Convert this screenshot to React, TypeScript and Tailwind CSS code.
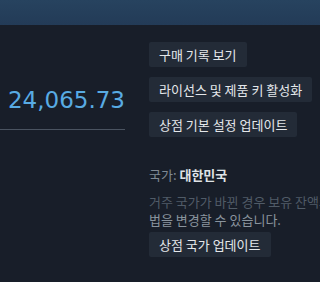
import React from 'react'

const btn =
    'flex h-[25px] items-center self-start whitespace-nowrap rounded-[2px] bg-[#232b37] px-[10px] text-[13px] text-[#e4e7ea]'

export default function App() {
    return (
        <div
            className="h-screen w-full overflow-hidden bg-[#181e29]"
            style={{ fontFamily: '"Noto Sans CJK KR", "Noto Sans", sans-serif' }}
        >
            {/* header strip */}
            <div className="h-[25px] bg-gradient-to-b from-[#27435f] to-[#233b57]" />

            <div className="flex gap-[24px]">
                {/* balance */}
                <div className="w-[125px] shrink-0 pt-[57px]">
                    <div className="border-b border-[#4a5360] pb-[11px] text-right text-[23px] leading-[36px] text-[#58abe3] [font-family:'DejaVu_Sans',sans-serif]">
                        24,065.73
                    </div>
                </div>

                {/* actions */}
                <div className="flex w-[300px] shrink-0 flex-col pt-[17px]">
                    <div className="flex flex-col gap-[10px]">
                        <button className={btn}>구매 기록 보기</button>
                        <button className={btn}>라이선스 및 제품 키 활성화</button>
                        <button className={btn}>상점 기본 설정 업데이트</button>
                    </div>

                    <div className="mt-[29px] text-[13px] leading-[18px] text-[#7f8994]">
                        국가: <span className="font-bold text-[#dfe3e6]">대한민국</span>
                    </div>

                    <div className="mt-[9px] whitespace-nowrap text-[13px] leading-[18px]">
                        <div className="text-[#505b67]">거주 국가가 바뀐 경우 보유 잔액과 결제 방</div>
                        <div className="text-[#8a949e]">법을 변경할 수 있습니다.</div>
                    </div>

                    <button className={`${btn} mt-[3px]`}>상점 국가 업데이트</button>
                </div>
            </div>
        </div>
    )
}
